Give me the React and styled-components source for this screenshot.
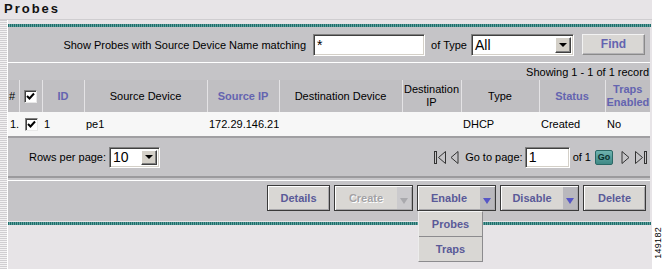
import styled, { createGlobalStyle } from "styled-components";

const GlobalStyle = createGlobalStyle`
  html, body { margin: 0; padding: 0; background: #fff; }
  body {
    font-family: "Liberation Sans", Arial, sans-serif;
    font-size: 11px;
    color: #000;
  }
`;

const BLUE = "#6464b0";

const Page = styled.div`
  display: flex;
  width: 664px;
  height: 269px;
  overflow: hidden;
`;

const Screen = styled.div`
  width: 652px;
  background: #e7e4e7;
  display: flex;
  flex-direction: column;
`;

const TitleBar = styled.div`
  height: 19px;
  line-height: 17px;
  padding-left: 4px;
  border-bottom: 1px solid #cfcdd0;
  font-size: 13px;
  font-weight: bold;
  letter-spacing: 2px;
  color: #111;
`;

const Body = styled.div`
  flex: 1;
  display: flex;
`;

const LeftStrip = styled.div`
  width: 7px;
  background: repeating-linear-gradient(to bottom, #d0ced1 0 1px, #f3f2f3 1px 2px);
`;

const Main = styled.div`
  flex: 1;
  border-left: 1px solid #fff;
  padding-top: 4px;
  display: flex;
  flex-direction: column;
`;

const TealBar = styled.div`
  width: 643px;
  height: 3px;
  margin-top: ${(p) => p.$gap || 0}px;
  background: repeating-linear-gradient(to right, #1f6e6c 0 1px, #5e9f9c 1px 2px);
`;

const Panel = styled.div`
  width: 642px;
  background: #c5c4c7;
  display: flex;
  flex-direction: column;
`;

const FilterRow = styled.div`
  height: 35px;
  display: flex;
  align-items: center;
  justify-content: flex-end;
  padding-right: 5px;
  border-bottom: 1px solid #fff;
`;

const Label = styled.span`
  font-size: 11px;
  margin-right: ${(p) => p.$mr || 0}px;
  white-space: nowrap;
`;

const Field = styled.div`
  box-sizing: border-box;
  width: ${(p) => p.$w}px;
  height: ${(p) => p.$h || 22}px;
  margin-right: ${(p) => p.$mr || 0}px;
  background: #fff;
  border-top: 1px solid #808080;
  border-left: 1px solid #808080;
  border-right: 1px solid #fff;
  border-bottom: 1px solid #fff;
  box-shadow: inset 1px 1px 0 #404040, inset -1px -1px 0 #d4d0c8;
  display: flex;
  align-items: center;
  padding: 2px 2px 2px 3px;
  font-size: 14px;
`;

const FieldValue = styled.span`
  flex: 1;
  line-height: 1;
`;

const ArrowBtn = styled.div`
  box-sizing: border-box;
  width: 16px;
  align-self: stretch;
  background: #d4d0c8;
  border-top: 1px solid #fff;
  border-left: 1px solid #fff;
  border-right: 1px solid #404040;
  border-bottom: 1px solid #404040;
  box-shadow: inset -1px -1px 0 #808080;
  display: flex;
  align-items: center;
  justify-content: center;
  &::after {
    content: "";
    width: 0;
    height: 0;
    border-left: 4px solid transparent;
    border-right: 4px solid transparent;
    border-top: 4px solid #000;
  }
`;

const FindButton = styled.div`
  box-sizing: border-box;
  width: 63px;
  height: 21px;
  margin-bottom: 1px;
  background: #d9d7d4;
  border-top: 1px solid #f2f2f2;
  border-left: 1px solid #f2f2f2;
  border-right: 1px solid #8a8a8a;
  border-bottom: 1px solid #8a8a8a;
  box-shadow: inset -1px -1px 0 #b4b3b6;
  display: flex;
  align-items: center;
  justify-content: center;
  font-size: 12px;
  font-weight: bold;
  color: ${BLUE};
`;

const InfoRow = styled.div`
  height: 17px;
  display: flex;
  align-items: center;
  justify-content: flex-end;
  padding-right: 1px;
  font-size: 11px;
`;

const Table = styled.table`
  width: 642px;
  border-collapse: collapse;
  table-layout: fixed;
`;

const Th = styled.th`
  height: 32px;
  padding: 0 1px;
  background: #c0bfc2;
  border-left: 1px solid #e4e3e5;
  text-align: ${(p) => p.$align || "center"};
  font-size: 11px;
  font-weight: ${(p) => (p.$sort ? "bold" : "normal")};
  color: ${(p) => (p.$sort ? BLUE : "#000")};
  line-height: 13px;
  overflow: hidden;
  &:first-child { border-left: none; }
`;

const Td = styled.td`
  height: 24px;
  padding: 0 1px 0 2px;
  background: #f7f7f7;
  font-size: 11px;
  white-space: nowrap;
  overflow: hidden;
  text-align: ${(p) => p.$align || "left"};
`;

const Check = styled.span`
  box-sizing: border-box;
  display: inline-flex;
  align-items: center;
  justify-content: center;
  vertical-align: middle;
  width: 13px;
  height: 13px;
  background: #fff;
  border-top: 1px solid #808080;
  border-left: 1px solid #808080;
  border-right: 1px solid #e8e8e8;
  border-bottom: 1px solid #e8e8e8;
  box-shadow: inset 1px 1px 0 #404040;
`;

const PagerRow = styled.div`
  height: 38px;
  display: flex;
  align-items: center;
  padding: 0 3px 0 21px;
  border-top: 2px solid #a09fa2;
  border-bottom: 2px solid #9b9a9d;
`;

const PagerNav = styled.div`
  margin-left: auto;
  display: flex;
  align-items: center;
`;

const NavIcon = styled.svg`
  display: block;
  margin-right: ${(p) => p.$mr || 0}px;
`;

const GoButton = styled.div`
  box-sizing: border-box;
  width: 18px;
  height: 15px;
  margin-right: 8px;
  border-radius: 2px;
  background: linear-gradient(#6fb2af, #3f8986);
  border: 1px solid #2b6866;
  display: flex;
  align-items: center;
  justify-content: center;
  font-size: 9px;
  font-weight: bold;
  color: #0b2f2e;
`;

const ActionRow = styled.div`
  height: 36px;
  margin-top: 2px;
  border-top: 1px solid #fff;
  display: flex;
  justify-content: flex-end;
  align-items: flex-start;
  gap: 4px;
  padding: 4px 4px 0 0;
`;

const ActionButton = styled.div`
  position: relative;
  box-sizing: border-box;
  width: ${(p) => p.$w}px;
  height: 26px;
  background: #d9d7d4;
  border: 1px solid #3a3a3a;
  box-shadow: inset 1px 1px 0 #fff, inset -1px -1px 0 #a9a8ab;
  display: flex;
  align-items: stretch;
  font-size: 11px;
  font-weight: bold;
  color: ${(p) => (p.$disabled ? "#a3a2a5" : "#5a5a98")};
  text-shadow: ${(p) => (p.$disabled ? "1px 1px 0 #fff" : "none")};
`;

const ButtonLabel = styled.div`
  flex: 1;
  display: flex;
  align-items: center;
  justify-content: center;
`;

const ArrowPart = styled.div`
  width: 14px;
  margin: 1px 1px 1px 0;
  background: ${(p) => (p.$disabled ? "#cbcacd" : "#b9b8bd")};
  display: flex;
  align-items: center;
  justify-content: center;
  &::after {
    content: "";
    margin-top: 6px;
    width: 0;
    height: 0;
    border-left: 4px solid transparent;
    border-right: 4px solid transparent;
    border-top: 6px solid ${(p) => (p.$disabled ? "#a9a9ad" : "#5656c6")};
  }
`;

const Menu = styled.div`
  position: absolute;
  top: calc(100% + 1px);
  left: 0;
  width: 65px;
  background: #d9d7d4;
  border-top: 1px solid #f4f4f4;
  border-left: 1px solid #ececec;
  border-right: 1px solid #8c8b8e;
  border-bottom: 1px solid #8c8b8e;
  box-sizing: border-box;
  z-index: 2;
`;

const MenuItem = styled.div`
  height: 24px;
  display: flex;
  align-items: center;
  justify-content: center;
  font-size: 11px;
  font-weight: bold;
  color: #5a5a98;
  & + & { border-top: 1px solid #8c8b8e; }
`;

const Side = styled.div`
  width: 12px;
  display: flex;
  flex-direction: column;
  justify-content: flex-end;
  align-items: center;
  padding-bottom: 10px;
`;

const FigNum = styled.div`
  writing-mode: vertical-rl;
  transform: rotate(180deg);
  font-size: 9px;
  letter-spacing: 0.3px;
`;

const CheckBox = () => (
  <Check>
    <svg width="9" height="9" viewBox="0 0 9 9">
      <path d="M1 4 L3.5 6.5 L8 1.5" fill="none" stroke="#000" strokeWidth="2" />
    </svg>
  </Check>
);

const Select = ({ w, h, value, mr }) => (
  <Field $w={w} $h={h} $mr={mr}>
    <FieldValue>{value}</FieldValue>
    <ArrowBtn />
  </Field>
);

const FirstIcon = () => (
  <NavIcon width="13" height="15" viewBox="0 0 13 15" $mr={3}>
    <rect x="0.5" y="1.5" width="2" height="12" fill="none" stroke="#333" />
    <path d="M11.5 1.5 L4.5 7.5 L11.5 13.5 Z" fill="none" stroke="#333" />
  </NavIcon>
);
const PrevIcon = () => (
  <NavIcon width="9" height="15" viewBox="0 0 9 15" $mr={6}>
    <path d="M8 1.5 L1 7.5 L8 13.5 Z" fill="none" stroke="#333" />
  </NavIcon>
);
const NextIcon = () => (
  <NavIcon width="9" height="15" viewBox="0 0 9 15" $mr={4}>
    <path d="M1 1.5 L8 7.5 L1 13.5 Z" fill="none" stroke="#333" />
  </NavIcon>
);
const LastIcon = () => (
  <NavIcon width="13" height="15" viewBox="0 0 13 15">
    <path d="M1.5 1.5 L8.5 7.5 L1.5 13.5 Z" fill="none" stroke="#333" />
    <rect x="10.5" y="1.5" width="2" height="12" fill="none" stroke="#333" />
  </NavIcon>
);

const columns = [
  { w: 11, label: "#", align: "left" },
  { w: 23, label: <CheckBox /> },
  { w: 42, label: "ID", sort: true },
  { w: 123, label: "Source Device" },
  { w: 72, label: "Source IP", sort: true },
  { w: 123, label: "Destination Device" },
  { w: 59, label: <>Destination<br />IP</> },
  { w: 78, label: "Type" },
  { w: 66, label: "Status", sort: true },
  { w: 45, label: <>Traps<br />Enabled</>, sort: true },
];

const row = ["1.", <CheckBox />, "1", "pe1", "172.29.146.21", "", "", "DHCP", "Created", "No"];

const App = () => {
  return (
    <Page>
      <GlobalStyle />
      <Screen>
        <TitleBar>Probes</TitleBar>
        <Body>
          <LeftStrip />
          <Main>
            <TealBar />
            <Panel>
              <FilterRow>
                <Label $mr={7}>Show Probes with Source Device Name matching</Label>
                <Field $w={112} $mr={6}>
                  <FieldValue>*</FieldValue>
                </Field>
                <Label $mr={4}>of Type</Label>
                <Select w={103} value="All" mr={8} />
                <FindButton>Find</FindButton>
              </FilterRow>

              <InfoRow>Showing 1 - 1 of 1 record</InfoRow>

              <Table>
                <colgroup>
                  {columns.map((c, i) => (
                    <col key={i} style={{ width: c.w }} />
                  ))}
                </colgroup>
                <thead>
                  <tr>
                    {columns.map((c, i) => (
                      <Th key={i} $sort={c.sort} $align={c.align}>
                        {c.label}
                      </Th>
                    ))}
                  </tr>
                </thead>
                <tbody>
                  <tr>
                    {row.map((v, i) => (
                      <Td key={i} $align={i === 1 ? "center" : "left"}>
                        {v}
                      </Td>
                    ))}
                  </tr>
                </tbody>
              </Table>

              <PagerRow>
                <Label $mr={3}>Rows per page:</Label>
                <Select w={51} h={21} value="10" />
                <PagerNav>
                  <FirstIcon />
                  <PrevIcon />
                  <Label $mr={2}>Go to page:</Label>
                  <Field $w={45} $h={21} $mr={3}>
                    <FieldValue>1</FieldValue>
                  </Field>
                  <Label $mr={4}>of 1</Label>
                  <GoButton>Go</GoButton>
                  <NextIcon />
                  <LastIcon />
                </PagerNav>
              </PagerRow>

              <ActionRow>
                <ActionButton $w={63}>
                  <ButtonLabel>Details</ButtonLabel>
                </ActionButton>
                <ActionButton $w={79} $disabled>
                  <ButtonLabel>Create</ButtonLabel>
                  <ArrowPart $disabled />
                </ActionButton>
                <ActionButton $w={79}>
                  <ButtonLabel>Enable</ButtonLabel>
                  <ArrowPart />
                  <Menu>
                    <MenuItem>Probes</MenuItem>
                    <MenuItem>Traps</MenuItem>
                  </Menu>
                </ActionButton>
                <ActionButton $w={79}>
                  <ButtonLabel>Disable</ButtonLabel>
                  <ArrowPart />
                </ActionButton>
                <ActionButton $w={63}>
                  <ButtonLabel>Delete</ButtonLabel>
                </ActionButton>
              </ActionRow>
            </Panel>
            <TealBar $gap={1} />
          </Main>
        </Body>
      </Screen>
      <Side>
        <FigNum>149182</FigNum>
      </Side>
    </Page>
  );
};

export default App;
